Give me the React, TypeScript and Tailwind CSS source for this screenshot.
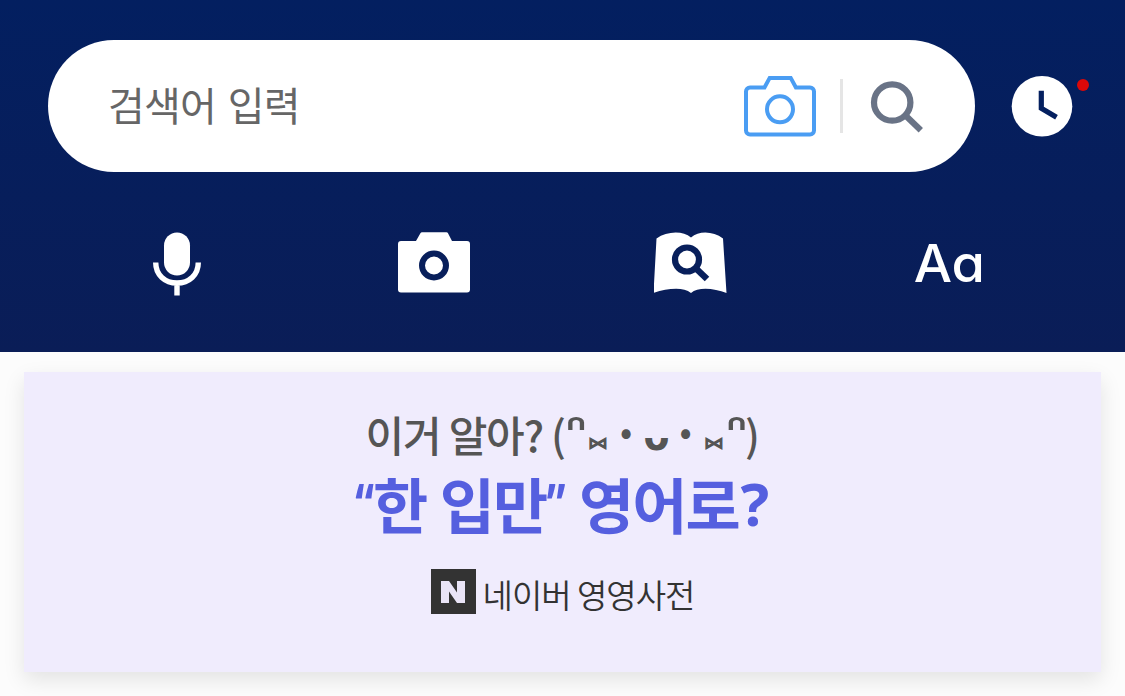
import type { ReactNode } from 'react';

function CameraOutlineIcon() {
  return (
    <svg width="72" height="62" viewBox="0 -0.5 72 62" fill="none" stroke="#4a9df3" strokeWidth="4">
      <path d="M6 12h14.5l5.2-9.6h21l5.2 9.6H66a4 4 0 0 1 4 4v39a4 4 0 0 1-4 4H6a4 4 0 0 1-4-4V16a4 4 0 0 1 4-4Z" />
      <circle cx="36" cy="33.8" r="13" />
    </svg>
  );
}

function SearchIcon() {
  return (
    <svg width="54" height="54" viewBox="0 0 54 54" fill="none" stroke="#697386" strokeWidth="6.2">
      <circle cx="22.2" cy="23.5" r="18.2" />
      <path d="M34.5 35.500 50.8 51.300" />
    </svg>
  );
}

function ClockIcon() {
  return (
    <svg width="62" height="62" viewBox="0 0 62 62" fill="none">
      <circle cx="31" cy="31.3" r="30.3" fill="#fff" />
      <path d="M30.3 15.8V33.3l15.2 9" stroke="#04205f" strokeWidth="5.2" />
    </svg>
  );
}

function MicIcon() {
  return (
    <svg width="48" height="64" viewBox="0 0 48 64" fill="none">
      <rect x="11" y="0.5" width="26" height="43" rx="13" fill="#fff" />
      <path d="M2.7 30.5C2.7 43 12 51 24 51s21.3-8 21.3-20.5M24 51v12.5" stroke="#fff" strokeWidth="5.4" />
    </svg>
  );
}

function CameraIcon() {
  return (
    <svg width="72" height="61" viewBox="0 0 72 61" fill="none">
      <path
        d="M3 9h15l4.4-7.8Q23 .3 24 .3h24.500q1 0 1.500.9L54 9h15a3 3 0 0 1 3 3v45.500a3 3 0 0 1-3 3H3a3 3 0 0 1-3-3V12a3 3 0 0 1 3-3Z"
        fill="#fff"
      />
      <circle cx="36" cy="33.500" r="12" stroke="#081f5b" strokeWidth="6" />
    </svg>
  );
}

function BookSearchIcon() {
  return (
    <svg width="74" height="62" viewBox="1 0 74 62" fill="none">
      <path
        d="M3.500 6.500C14-1 30-1.500 38 5.500 46-1.500 60-1 70 6.500L73.500 61C61 56 45 54.500 38 61 30 54.500 14 56.500.5 61Z"
        fill="#fff"
      />
      <circle cx="34" cy="27.500" r="12" stroke="#081f5b" strokeWidth="6.200" />
      <path d="m42.500 36 11.500 11" stroke="#081f5b" strokeWidth="6.500" />
    </svg>
  );
}

const tools: { name: string; icon: ReactNode }[] = [
  { name: 'voice', icon: <MicIcon /> },
  { name: 'camera', icon: <CameraIcon /> },
  { name: 'book', icon: <BookSearchIcon /> },
  {
    name: 'text',
    icon: (
      <span className="translate-x-px scale-x-104 font-['Inter',sans-serif] text-[52px] leading-[64px] font-medium text-white [font-feature-settings:'cv11'] whitespace-nowrap">
        Aa
      </span>
    ),
  },
];

function Header() {
  return (
    <header className="h-[352px] bg-linear-to-b from-[#031f60] to-[#0a1d57] px-12 pt-10">
      <div className="flex items-center">
        <div className="flex h-[132px] w-[927px] items-center rounded-full bg-white pl-[60px]">
          <span className="-mt-[5px] grow text-[40px] leading-[60px] tracking-[-0.8px] text-[#666] [word-spacing:3.5px]">
            검색어 입력
          </span>
          <CameraOutlineIcon />
          <span className="ml-6 h-[54px] w-[3px] bg-[#e5e5e5]" />
          <button className="mr-[51px] ml-[27px]">
            <SearchIcon />
          </button>
        </div>
        <button className="relative ml-9">
          <ClockIcon />
          <span className="absolute top-[4px] left-[66px] size-3 rounded-full bg-[#dc0808]" />
        </button>
      </div>
      <nav className="mt-[60px] grid h-16 grid-cols-4">
        {tools.map((t) => (
          <button key={t.name} className="flex items-start justify-center">
            {t.icon}
          </button>
        ))}
      </nav>
    </header>
  );
}

// 카오모지: 글자마다 폭과 높이가 달라 칸을 나눠서 그린다
const kaomoji: { char: string; className: string }[] = [
  { char: '(', className: 'w-3 font-medium' },
  {
    char: 'ᐢ',
    className:
      "w-[22px] -translate-y-[3px] scale-x-110 scale-y-80 font-['DejaVu_Sans',sans-serif] text-[52px] leading-[50px] font-bold",
  },
  {
    char: '⑅',
    className: "w-[22px] translate-y-[8px] font-['DejaVu_Sans',sans-serif] text-[33px] leading-[40px] font-bold",
  },
  { char: '•', className: 'w-[35px] -translate-y-[5px] text-[36px]' },
  {
    char: 'ᴗ',
    className:
      "w-[25px] translate-y-[2px] scale-x-90 font-['DejaVu_Sans',sans-serif] text-[42px] leading-[50px] font-bold",
  },
  { char: '•', className: 'w-[34px] -translate-y-[5px] text-[36px]' },
  {
    char: '⑅',
    className: "w-[23px] translate-y-[8px] font-['DejaVu_Sans',sans-serif] text-[33px] leading-[40px] font-bold",
  },
  {
    char: 'ᐢ',
    className:
      "w-[21px] -translate-y-[3px] scale-x-110 scale-y-80 font-['DejaVu_Sans',sans-serif] text-[52px] leading-[50px] font-bold",
  },
  { char: ')', className: 'w-3 font-medium' },
];

function QuizCard() {
  return (
    <section className="mx-6 mt-5 flex h-[300px] flex-col items-center bg-[#f0ecfd] pt-[31px] shadow-[0_8px_20px_rgba(0,0,0,0.1)]">
      <p className="flex h-[62px] items-center text-[42px] leading-[62px] whitespace-nowrap text-[#555]">
        <span className="w-[186px] -translate-x-px font-medium tracking-[-1.2px]">이거 알아?</span>
        {kaomoji.map((k, i) => (
          <span key={i} className={`flex justify-center ${k.className}`}>
            {k.char}
          </span>
        ))}
      </p>
      <h2 className="flex h-[80px] w-[415px] text-[60px] leading-[76px] font-bold tracking-[-2px] text-[#555fdf] whitespace-nowrap">
        <span className="flex w-[19px] scale-x-70 justify-center font-['Noto_Sans',sans-serif] tracking-normal">“</span>
        <span className="w-[172px] -translate-x-px [word-spacing:2px]">한 입만</span>
        <span className="flex w-5 scale-x-70 justify-center font-['Noto_Sans',sans-serif] tracking-normal">”</span>
        <span className="ml-[13px] flex">
          영어로<span className="ml-[2px] font-['Noto_Sans',sans-serif]">?</span>
        </span>
      </h2>
      <div className="mt-[25px] flex items-center gap-[7px]">
        <span className="-mt-[5px] flex size-[45px] items-center justify-center bg-[#333]">
          <svg width="24" height="22" viewBox="0 0 24 22" fill="#e9e4f7">
            <path d="M0 0h8l8 11.500V0h8v22h-8L8 10.500V22H0Z" />
          </svg>
        </span>
        <span className="text-[33px] leading-[48px] font-[350] tracking-[-1px] text-[#333]">네이버 영영사전</span>
      </div>
    </section>
  );
}

export default function App() {
  return (
    <div className="h-[696px] overflow-hidden bg-[#fcfcfc] font-['Noto_Sans_CJK_KR',sans-serif]">
      <Header />
      <QuizCard />
    </div>
  );
}
